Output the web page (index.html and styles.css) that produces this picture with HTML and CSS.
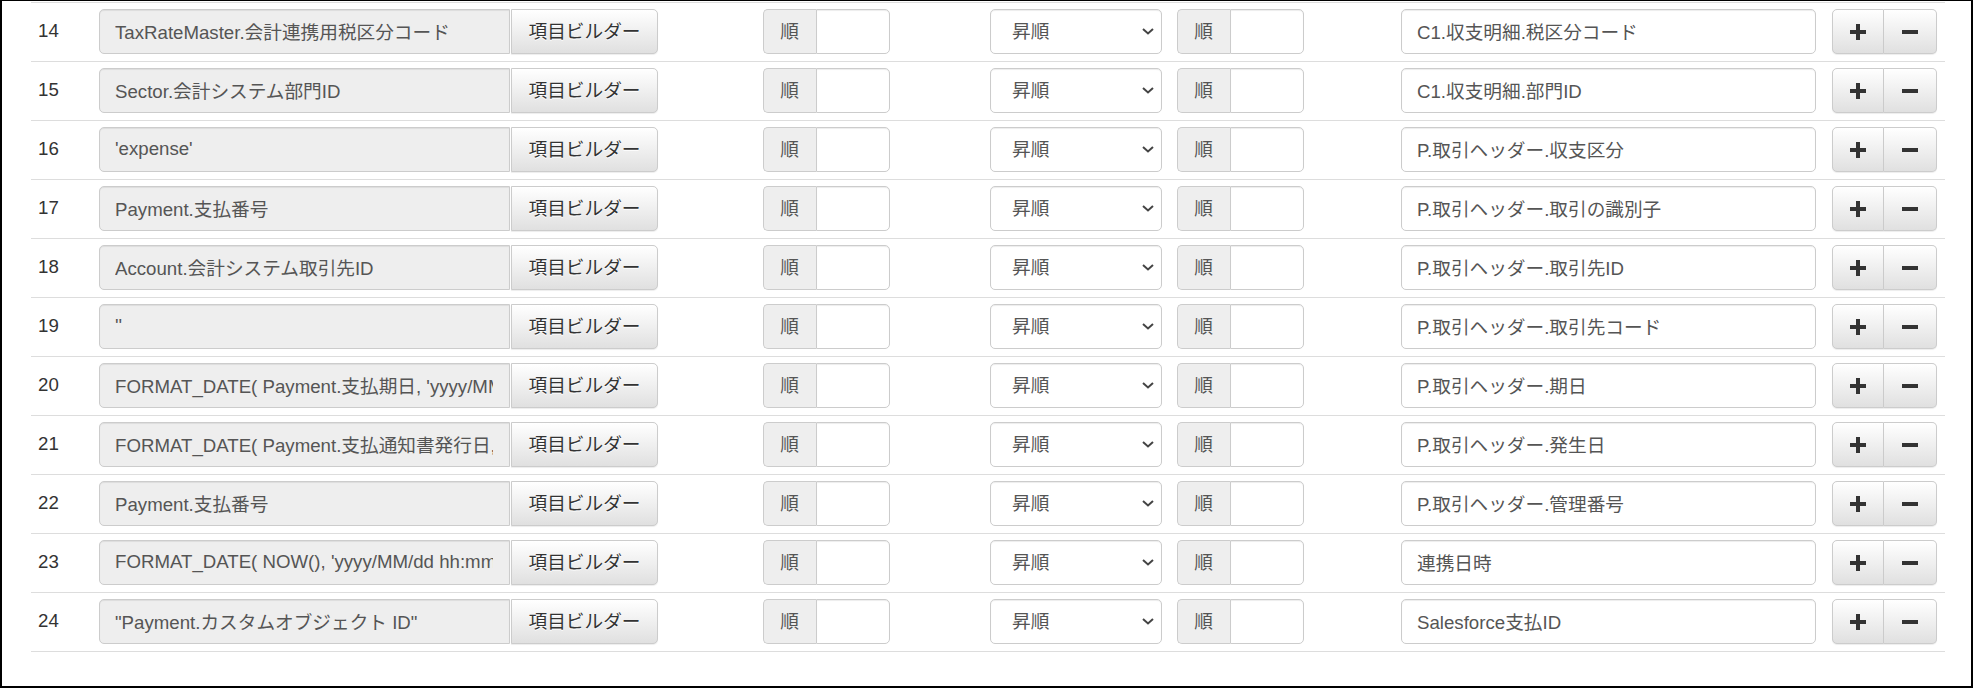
FILE: index.html
```html
<!DOCTYPE html>
<html lang="ja">
<head>
<meta charset="utf-8">
<title>Mapping</title>
<link rel="stylesheet" href="styles.css">
</head>
<body>
<div class="frame">
  <div class="rows" id="rows">
    <div class="row">
      <div class="num">14</div>
      <div class="field"><input class="src" type="text" readonly value="TaxRateMaster.会計連携用税区分コード"><button class="btn builder">項目ビルダー</button></div>
      <div class="ord"><span class="addon">順</span><input class="ordin" type="text"></div>
      <div class="sel"><select class="dir"><option>昇順</option><option>降順</option></select><svg class="chev" width="12" height="7" viewBox="0 0 12 7"><path d="M1 1l5 4.5L11 1" fill="none" stroke="#444" stroke-width="2"/></svg></div>
      <div class="ord"><span class="addon">順</span><input class="ordin" type="text"></div>
      <div class="tgt"><input class="dst" type="text" value="C1.収支明細.税区分コード"></div>
      <div class="ops"><button class="btn op"><svg width="16" height="16" viewBox="0 0 16 16"><path d="M6 0h4v6h6v4h-6v6H6v-6H0V6h6z" fill="#333"/></svg></button><button class="btn op"><svg width="16" height="16" viewBox="0 0 16 16"><path d="M0 6h16v4H0z" fill="#333"/></svg></button></div>
    </div>
    <div class="row">
      <div class="num">15</div>
      <div class="field"><input class="src" type="text" readonly value="Sector.会計システム部門ID"><button class="btn builder">項目ビルダー</button></div>
      <div class="ord"><span class="addon">順</span><input class="ordin" type="text"></div>
      <div class="sel"><select class="dir"><option>昇順</option><option>降順</option></select><svg class="chev" width="12" height="7" viewBox="0 0 12 7"><path d="M1 1l5 4.5L11 1" fill="none" stroke="#444" stroke-width="2"/></svg></div>
      <div class="ord"><span class="addon">順</span><input class="ordin" type="text"></div>
      <div class="tgt"><input class="dst" type="text" value="C1.収支明細.部門ID"></div>
      <div class="ops"><button class="btn op"><svg width="16" height="16" viewBox="0 0 16 16"><path d="M6 0h4v6h6v4h-6v6H6v-6H0V6h6z" fill="#333"/></svg></button><button class="btn op"><svg width="16" height="16" viewBox="0 0 16 16"><path d="M0 6h16v4H0z" fill="#333"/></svg></button></div>
    </div>
    <div class="row">
      <div class="num">16</div>
      <div class="field"><input class="src" type="text" readonly value="'expense'"><button class="btn builder">項目ビルダー</button></div>
      <div class="ord"><span class="addon">順</span><input class="ordin" type="text"></div>
      <div class="sel"><select class="dir"><option>昇順</option><option>降順</option></select><svg class="chev" width="12" height="7" viewBox="0 0 12 7"><path d="M1 1l5 4.5L11 1" fill="none" stroke="#444" stroke-width="2"/></svg></div>
      <div class="ord"><span class="addon">順</span><input class="ordin" type="text"></div>
      <div class="tgt"><input class="dst" type="text" value="P.取引ヘッダー.収支区分"></div>
      <div class="ops"><button class="btn op"><svg width="16" height="16" viewBox="0 0 16 16"><path d="M6 0h4v6h6v4h-6v6H6v-6H0V6h6z" fill="#333"/></svg></button><button class="btn op"><svg width="16" height="16" viewBox="0 0 16 16"><path d="M0 6h16v4H0z" fill="#333"/></svg></button></div>
    </div>
    <div class="row">
      <div class="num">17</div>
      <div class="field"><input class="src" type="text" readonly value="Payment.支払番号"><button class="btn builder">項目ビルダー</button></div>
      <div class="ord"><span class="addon">順</span><input class="ordin" type="text"></div>
      <div class="sel"><select class="dir"><option>昇順</option><option>降順</option></select><svg class="chev" width="12" height="7" viewBox="0 0 12 7"><path d="M1 1l5 4.5L11 1" fill="none" stroke="#444" stroke-width="2"/></svg></div>
      <div class="ord"><span class="addon">順</span><input class="ordin" type="text"></div>
      <div class="tgt"><input class="dst" type="text" value="P.取引ヘッダー.取引の識別子"></div>
      <div class="ops"><button class="btn op"><svg width="16" height="16" viewBox="0 0 16 16"><path d="M6 0h4v6h6v4h-6v6H6v-6H0V6h6z" fill="#333"/></svg></button><button class="btn op"><svg width="16" height="16" viewBox="0 0 16 16"><path d="M0 6h16v4H0z" fill="#333"/></svg></button></div>
    </div>
    <div class="row">
      <div class="num">18</div>
      <div class="field"><input class="src" type="text" readonly value="Account.会計システム取引先ID"><button class="btn builder">項目ビルダー</button></div>
      <div class="ord"><span class="addon">順</span><input class="ordin" type="text"></div>
      <div class="sel"><select class="dir"><option>昇順</option><option>降順</option></select><svg class="chev" width="12" height="7" viewBox="0 0 12 7"><path d="M1 1l5 4.5L11 1" fill="none" stroke="#444" stroke-width="2"/></svg></div>
      <div class="ord"><span class="addon">順</span><input class="ordin" type="text"></div>
      <div class="tgt"><input class="dst" type="text" value="P.取引ヘッダー.取引先ID"></div>
      <div class="ops"><button class="btn op"><svg width="16" height="16" viewBox="0 0 16 16"><path d="M6 0h4v6h6v4h-6v6H6v-6H0V6h6z" fill="#333"/></svg></button><button class="btn op"><svg width="16" height="16" viewBox="0 0 16 16"><path d="M0 6h16v4H0z" fill="#333"/></svg></button></div>
    </div>
    <div class="row">
      <div class="num">19</div>
      <div class="field"><input class="src" type="text" readonly value="''"><button class="btn builder">項目ビルダー</button></div>
      <div class="ord"><span class="addon">順</span><input class="ordin" type="text"></div>
      <div class="sel"><select class="dir"><option>昇順</option><option>降順</option></select><svg class="chev" width="12" height="7" viewBox="0 0 12 7"><path d="M1 1l5 4.5L11 1" fill="none" stroke="#444" stroke-width="2"/></svg></div>
      <div class="ord"><span class="addon">順</span><input class="ordin" type="text"></div>
      <div class="tgt"><input class="dst" type="text" value="P.取引ヘッダー.取引先コード"></div>
      <div class="ops"><button class="btn op"><svg width="16" height="16" viewBox="0 0 16 16"><path d="M6 0h4v6h6v4h-6v6H6v-6H0V6h6z" fill="#333"/></svg></button><button class="btn op"><svg width="16" height="16" viewBox="0 0 16 16"><path d="M0 6h16v4H0z" fill="#333"/></svg></button></div>
    </div>
    <div class="row">
      <div class="num">20</div>
      <div class="field"><input class="src" type="text" readonly value="FORMAT_DATE( Payment.支払期日, 'yyyy/MM/dd')"><button class="btn builder">項目ビルダー</button></div>
      <div class="ord"><span class="addon">順</span><input class="ordin" type="text"></div>
      <div class="sel"><select class="dir"><option>昇順</option><option>降順</option></select><svg class="chev" width="12" height="7" viewBox="0 0 12 7"><path d="M1 1l5 4.5L11 1" fill="none" stroke="#444" stroke-width="2"/></svg></div>
      <div class="ord"><span class="addon">順</span><input class="ordin" type="text"></div>
      <div class="tgt"><input class="dst" type="text" value="P.取引ヘッダー.期日"></div>
      <div class="ops"><button class="btn op"><svg width="16" height="16" viewBox="0 0 16 16"><path d="M6 0h4v6h6v4h-6v6H6v-6H0V6h6z" fill="#333"/></svg></button><button class="btn op"><svg width="16" height="16" viewBox="0 0 16 16"><path d="M0 6h16v4H0z" fill="#333"/></svg></button></div>
    </div>
    <div class="row">
      <div class="num">21</div>
      <div class="field"><input class="src" type="text" readonly value="FORMAT_DATE( Payment.支払通知書発行日, 'yyyy/MM/dd')"><button class="btn builder">項目ビルダー</button></div>
      <div class="ord"><span class="addon">順</span><input class="ordin" type="text"></div>
      <div class="sel"><select class="dir"><option>昇順</option><option>降順</option></select><svg class="chev" width="12" height="7" viewBox="0 0 12 7"><path d="M1 1l5 4.5L11 1" fill="none" stroke="#444" stroke-width="2"/></svg></div>
      <div class="ord"><span class="addon">順</span><input class="ordin" type="text"></div>
      <div class="tgt"><input class="dst" type="text" value="P.取引ヘッダー.発生日"></div>
      <div class="ops"><button class="btn op"><svg width="16" height="16" viewBox="0 0 16 16"><path d="M6 0h4v6h6v4h-6v6H6v-6H0V6h6z" fill="#333"/></svg></button><button class="btn op"><svg width="16" height="16" viewBox="0 0 16 16"><path d="M0 6h16v4H0z" fill="#333"/></svg></button></div>
    </div>
    <div class="row">
      <div class="num">22</div>
      <div class="field"><input class="src" type="text" readonly value="Payment.支払番号"><button class="btn builder">項目ビルダー</button></div>
      <div class="ord"><span class="addon">順</span><input class="ordin" type="text"></div>
      <div class="sel"><select class="dir"><option>昇順</option><option>降順</option></select><svg class="chev" width="12" height="7" viewBox="0 0 12 7"><path d="M1 1l5 4.5L11 1" fill="none" stroke="#444" stroke-width="2"/></svg></div>
      <div class="ord"><span class="addon">順</span><input class="ordin" type="text"></div>
      <div class="tgt"><input class="dst" type="text" value="P.取引ヘッダー.管理番号"></div>
      <div class="ops"><button class="btn op"><svg width="16" height="16" viewBox="0 0 16 16"><path d="M6 0h4v6h6v4h-6v6H6v-6H0V6h6z" fill="#333"/></svg></button><button class="btn op"><svg width="16" height="16" viewBox="0 0 16 16"><path d="M0 6h16v4H0z" fill="#333"/></svg></button></div>
    </div>
    <div class="row">
      <div class="num">23</div>
      <div class="field"><input class="src" type="text" readonly value="FORMAT_DATE( NOW(), 'yyyy/MM/dd hh:mm:ss')"><button class="btn builder">項目ビルダー</button></div>
      <div class="ord"><span class="addon">順</span><input class="ordin" type="text"></div>
      <div class="sel"><select class="dir"><option>昇順</option><option>降順</option></select><svg class="chev" width="12" height="7" viewBox="0 0 12 7"><path d="M1 1l5 4.5L11 1" fill="none" stroke="#444" stroke-width="2"/></svg></div>
      <div class="ord"><span class="addon">順</span><input class="ordin" type="text"></div>
      <div class="tgt"><input class="dst" type="text" value="連携日時"></div>
      <div class="ops"><button class="btn op"><svg width="16" height="16" viewBox="0 0 16 16"><path d="M6 0h4v6h6v4h-6v6H6v-6H0V6h6z" fill="#333"/></svg></button><button class="btn op"><svg width="16" height="16" viewBox="0 0 16 16"><path d="M0 6h16v4H0z" fill="#333"/></svg></button></div>
    </div>
    <div class="row">
      <div class="num">24</div>
      <div class="field"><input class="src" type="text" readonly value="&quot;Payment.カスタムオブジェクト ID&quot;"><button class="btn builder">項目ビルダー</button></div>
      <div class="ord"><span class="addon">順</span><input class="ordin" type="text"></div>
      <div class="sel"><select class="dir"><option>昇順</option><option>降順</option></select><svg class="chev" width="12" height="7" viewBox="0 0 12 7"><path d="M1 1l5 4.5L11 1" fill="none" stroke="#444" stroke-width="2"/></svg></div>
      <div class="ord"><span class="addon">順</span><input class="ordin" type="text"></div>
      <div class="tgt"><input class="dst" type="text" value="Salesforce支払ID"></div>
      <div class="ops"><button class="btn op"><svg width="16" height="16" viewBox="0 0 16 16"><path d="M6 0h4v6h6v4h-6v6H6v-6H0V6h6z" fill="#333"/></svg></button><button class="btn op"><svg width="16" height="16" viewBox="0 0 16 16"><path d="M0 6h16v4H0z" fill="#333"/></svg></button></div>
    </div>
  </div>
</div>
</body>
</html>
```

FILE: styles.css
```css
* { box-sizing: border-box; }
html, body { margin: 0; padding: 0; background: #fff; }
body {
  font-family: "Liberation Sans", Arial, "Noto Sans CJK JP", sans-serif;
  font-size: 18.67px;
  color: #333;
}
.frame {
  width: 1973px;
  height: 688px;
  border: 2px solid #000;
  border-top-width: 1px;
  padding: 1px 0 0 29px;
  overflow: hidden;
}
.rows {
  width: 1914px;
  border-bottom: 1px solid #ddd;
}
.row {
  display: grid;
  grid-template-columns: 68px 664px 227px 187px 224px 431px 113px;
  align-items: center;
  border-top: 1px solid #ddd;
  padding: 6px 0 7px;
}
.num {
  padding-left: 7px;
  color: #333;
  padding-bottom: 1px;
}
input, select, button {
  font-family: inherit;
  font-size: inherit;
  margin: 0;
}
.field, .ord, .tgt, .ops { display: flex; }
.src, .dst, .ordin {
  height: 45px;
  border: 1px solid #ccc;
  color: #555;
  padding: 0 16px 2px 15px;
  box-shadow: inset 0 1px 1px rgba(0,0,0,.075);
  outline: none;
}
.src {
  width: 411px;
  background: #eee;
  border-radius: 5px 0 0 5px;
}
.btn {
  height: 45px;
  border: 1px solid #ccc;
  color: #333;
  background-color: #e6e6e6;
  background-image: linear-gradient(to bottom, #fff 0, #e0e0e0 100%);
  text-shadow: 0 1px 0 #fff;
  box-shadow: inset 0 1px 0 rgba(255,255,255,.15), 0 1px 1px rgba(0,0,0,.075);
  padding: 0;
  cursor: pointer;
}
.builder {
  width: 147px;
  margin-left: 1px;
  border-radius: 0 5px 5px 0;
  padding-bottom: 4px;
}
.addon {
  width: 53px;
  height: 45px;
  display: flex;
  align-items: center;
  justify-content: center;
  background: #eee;
  border: 1px solid #ccc;
  border-right: 0;
  border-radius: 5px 0 0 5px;
  color: #555;
  padding: 0 1px 5px 0;
}
.ordin {
  width: 74px;
  background: #fff;
  border-radius: 0 5px 5px 0;
}
.sel {
  position: relative;
  width: 172px;
}
.dir {
  display: block;
  width: 172px;
  height: 45px;
  appearance: none;
  -webkit-appearance: none;
  background: #fff;
  border: 1px solid #ccc;
  border-radius: 5px;
  color: #555;
  padding: 0 30px 0 21px;
  box-shadow: inset 0 1px 1px rgba(0,0,0,.075);
}
.chev {
  position: absolute;
  right: 8px;
  top: 19px;
  pointer-events: none;
}
.dst {
  width: 415px;
  background: #fff;
  border-radius: 5px;
}
.op {
  width: 52px;
  display: flex;
  align-items: center;
  justify-content: center;
}
.op:first-child { border-radius: 5px 0 0 5px; width: 52px; }
.op:last-child { border-radius: 0 5px 5px 0; border-left: 0; width: 53px; }
```
